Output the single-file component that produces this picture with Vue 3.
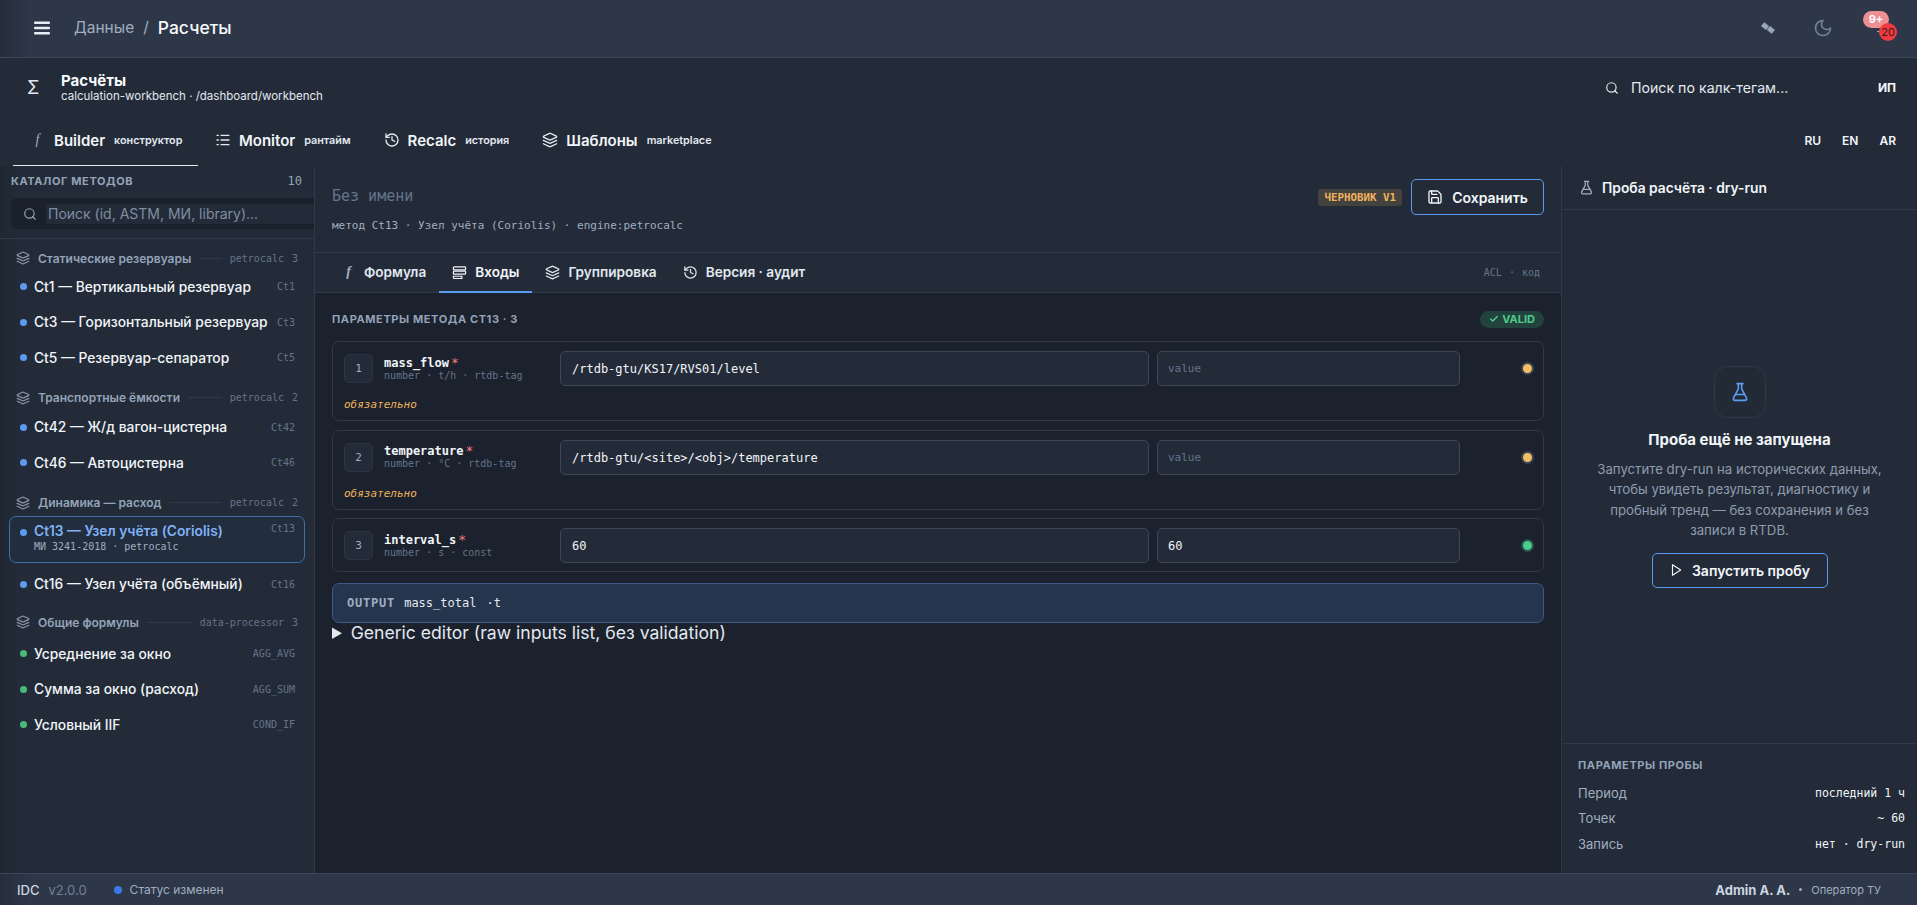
<script setup>
const groups = [
  { name: 'Статические резервуары', lib: 'petrocalc', count: 3, items: [
    { name: 'Ct1 — Вертикальный резервуар', code: 'Ct1' },
    { name: 'Ct3 — Горизонтальный резервуар', code: 'Ct3' },
    { name: 'Ct5 — Резервуар-сепаратор', code: 'Ct5' },
  ] },
  { name: 'Транспортные ёмкости', lib: 'petrocalc', count: 2, items: [
    { name: 'Ct42 — Ж/д вагон-цистерна', code: 'Ct42' },
    { name: 'Ct46 — Автоцистерна', code: 'Ct46' },
  ] },
  { name: 'Динамика — расход', lib: 'petrocalc', count: 2, items: [
    { name: 'Ct13 — Узел учёта (Coriolis)', code: 'Ct13', active: true, sub: 'МИ 3241-2018 · petrocalc' },
    { name: 'Ct16 — Узел учёта (объёмный)', code: 'Ct16' },
  ] },
  { name: 'Общие формулы', lib: 'data-processor', count: 3, green: true, items: [
    { name: 'Усреднение за окно', code: 'AGG_AVG' },
    { name: 'Сумма за окно (расход)', code: 'AGG_SUM' },
    { name: 'Условный IIF', code: 'COND_IF' },
  ] },
];

const params = [
  { n: 1, name: 'mass_flow', meta: 'number · t/h · rtdb-tag', value: '/rtdb-gtu/KS17/RVS01/level', second: '', warn: true },
  { n: 2, name: 'temperature', meta: 'number · °C · rtdb-tag', value: '/rtdb-gtu/<site>/<obj>/temperature', second: '', warn: true },
  { n: 3, name: 'interval_s', meta: 'number · s · const', value: '60', second: '60', warn: false },
];

const probe = [
  { label: 'Период', value: 'последний 1 ч' },
  { label: 'Точек', value: '~ 60' },
  { label: 'Запись', value: 'нет · dry-run' },
];
</script>

<template>
  <div class="page">
    <header class="topbar">
      <svg class="burger" viewBox="0 0 16 14" width="16" height="14" fill="currentColor"><rect y="0.5" width="16" height="2.6" rx="1"/><rect y="5.7" width="16" height="2.6" rx="1"/><rect y="10.9" width="16" height="2.6" rx="1"/></svg>
      <span class="crumb">Данные</span>
      <span class="crumb slash">/</span>
      <span class="crumb-now">Расчеты</span>
      <div class="top-actions">
        <svg class="sat" viewBox="0 0 12 12" width="14" height="14" fill="currentColor"><rect x="0.8" y="2.2" width="5.4" height="4.4" transform="rotate(40 3.5 4.4)"/><rect x="5.8" y="5.4" width="5.4" height="4.4" transform="rotate(40 8.5 7.6)"/></svg>
        <svg class="moon" viewBox="0 0 24 24" width="20" height="20" fill="none" stroke="currentColor" stroke-width="2" stroke-linecap="round" stroke-linejoin="round"><path d="M12 3a6 6 0 0 0 9 9 9 9 0 1 1-9-9Z"/></svg>
        <div class="bell">
          <span class="bell-dash"></span>
          <span class="badge-pink">9+</span>
          <span class="badge-red">20</span>
        </div>
      </div>
    </header>

    <section class="headrow">
      <span class="sigma">Σ</span>
      <div class="headtext">
        <div class="headtitle">Расчёты</div>
        <div class="headsub">calculation-workbench · /dashboard/workbench</div>
      </div>
      <div class="tagsearch">
        <svg viewBox="0 0 24 24" width="14" height="14" fill="none" stroke="currentColor" stroke-width="2" stroke-linecap="round"><circle cx="11" cy="11" r="8"/><path d="m21 21-4.3-4.3"/></svg>
        <span>Поиск по калк-тегам...</span>
      </div>
      <span class="initials">ИП</span>
    </section>

    <nav class="maintabs">
      <div class="mtab on">
        <span class="fx">f</span><b>Builder</b><small>конструктор</small>
      </div>
      <div class="mtab">
        <svg viewBox="0 0 24 24" width="16" height="16" fill="none" stroke="currentColor" stroke-width="2" stroke-linecap="round"><path d="M9 5h12M9 12h12M9 19h12M3 5h2M3 12h2M3 19h2"/></svg>
        <b>Monitor</b><small>рантайм</small>
      </div>
      <div class="mtab">
        <svg viewBox="0 0 24 24" width="16" height="16" fill="none" stroke="currentColor" stroke-width="2" stroke-linecap="round" stroke-linejoin="round"><path d="M3 12a9 9 0 1 0 9-9 9.75 9.75 0 0 0-6.74 2.74L3 8"/><path d="M3 3v5h5"/><path d="M12 7v5l4 2"/></svg>
        <b>Recalc</b><small>история</small>
      </div>
      <div class="mtab">
        <svg viewBox="0 0 24 24" width="16" height="16" fill="none" stroke="currentColor" stroke-width="2" stroke-linecap="round" stroke-linejoin="round"><path d="m12.83 2.18a2 2 0 0 0-1.66 0L2.6 6.08a1 1 0 0 0 0 1.83l8.58 3.91a2 2 0 0 0 1.66 0l8.58-3.9a1 1 0 0 0 0-1.83Z"/><path d="m22 17.65-9.17 4.16a2 2 0 0 1-1.66 0L2 17.65"/><path d="m22 12.65-9.17 4.16a2 2 0 0 1-1.66 0L2 12.65"/></svg>
        <b>Шаблоны</b><small>marketplace</small>
      </div>
      <div class="langs"><span>RU</span><span>EN</span><span>AR</span></div>
    </nav>

    <div class="columns">
      <aside class="catalog">
        <div class="cat-top">
          <span class="cat-title">КАТАЛОГ МЕТОДОВ</span>
          <span class="cat-count">10</span>
        </div>
        <div class="cat-search">
          <svg viewBox="0 0 24 24" width="14" height="14" fill="none" stroke="currentColor" stroke-width="2" stroke-linecap="round"><circle cx="11" cy="11" r="8"/><path d="m21 21-4.3-4.3"/></svg>
          <div class="cat-input">Поиск (id, ASTM, МИ, library)...</div>
        </div>
        <div class="cat-list">
          <div v-for="(g, i) in groups" :key="g.name" class="group" :class="{ shared: g.green, first: i === 0 }">
            <div class="group-head">
              <svg viewBox="0 0 24 24" width="14" height="14" fill="none" stroke="currentColor" stroke-width="2" stroke-linecap="round" stroke-linejoin="round"><path d="m12.83 2.18a2 2 0 0 0-1.66 0L2.6 6.08a1 1 0 0 0 0 1.83l8.58 3.91a2 2 0 0 0 1.66 0l8.58-3.9a1 1 0 0 0 0-1.83Z"/><path d="m22 17.65-9.17 4.16a2 2 0 0 1-1.66 0L2 17.65"/><path d="m22 12.65-9.17 4.16a2 2 0 0 1-1.66 0L2 12.65"/></svg>
              <span class="group-name">{{ g.name }}</span>
              <span class="group-line"></span>
              <span class="group-lib">{{ g.lib }}</span>
              <span class="group-num">{{ g.count }}</span>
            </div>
            <div v-for="m in g.items" :key="m.code" class="method" :class="{ active: m.active }">
              <span class="mdot" :class="{ green: g.green }"></span>
              <div class="mtext">
                <div class="mname">{{ m.name }}</div>
                <div v-if="m.sub" class="msub">{{ m.sub }}</div>
              </div>
              <span class="mcode">{{ m.code }}</span>
            </div>
          </div>
        </div>
      </aside>

      <main class="center">
        <div class="draft-head">
          <div>
            <div class="draft-name">Без имени</div>
            <div class="draft-meta">метод Ct13 · Узел учёта (Coriolis) · engine:petrocalc</div>
          </div>
          <div class="draft-right">
            <span class="draft-tag">ЧЕРНОВИК V1</span>
            <button class="btn save">
              <svg viewBox="0 0 24 24" width="16" height="16" fill="none" stroke="currentColor" stroke-width="2" stroke-linecap="round" stroke-linejoin="round"><path d="M15.2 3a2 2 0 0 1 1.4.6l3.8 3.8a2 2 0 0 1 .6 1.4V19a2 2 0 0 1-2 2H5a2 2 0 0 1-2-2V5a2 2 0 0 1 2-2z"/><path d="M17 21v-7a1 1 0 0 0-1-1H8a1 1 0 0 0-1 1v7"/><path d="M7 3v4a1 1 0 0 0 1 1h7"/></svg>
              Сохранить
            </button>
          </div>
        </div>

        <div class="subtabs">
          <div class="stab"><span class="fx small">f</span>Формула</div>
          <div class="stab on">
            <svg viewBox="0 0 16 16" width="15" height="15" fill="none" stroke="currentColor" stroke-width="1.3"><rect x="1.5" y="2" width="13" height="3.2" rx="0.8"/><rect x="1.5" y="6.6" width="13" height="3.2" rx="0.8"/><path d="M1.5 12h9v2.4h-8a1 1 0 0 1-1-1z"/></svg>
            Входы
          </div>
          <div class="stab">
            <svg viewBox="0 0 24 24" width="15" height="15" fill="none" stroke="currentColor" stroke-width="2" stroke-linecap="round" stroke-linejoin="round"><path d="m12.83 2.18a2 2 0 0 0-1.66 0L2.6 6.08a1 1 0 0 0 0 1.83l8.58 3.91a2 2 0 0 0 1.66 0l8.58-3.9a1 1 0 0 0 0-1.83Z"/><path d="m22 17.65-9.17 4.16a2 2 0 0 1-1.66 0L2 17.65"/><path d="m22 12.65-9.17 4.16a2 2 0 0 1-1.66 0L2 12.65"/></svg>
            Группировка
          </div>
          <div class="stab">
            <svg viewBox="0 0 24 24" width="15" height="15" fill="none" stroke="currentColor" stroke-width="2" stroke-linecap="round" stroke-linejoin="round"><path d="M3 12a9 9 0 1 0 9-9 9.75 9.75 0 0 0-6.74 2.74L3 8"/><path d="M3 3v5h5"/><path d="M12 7v5l4 2"/></svg>
            Версия · аудит
          </div>
          <span class="acl">ACL · код</span>
        </div>

        <div class="inputs">
          <div class="inputs-top">
            <span class="inputs-title">ПАРАМЕТРЫ МЕТОДА CT13 · 3</span>
            <span class="valid">
              <svg viewBox="0 0 24 24" width="10" height="10" fill="none" stroke="currentColor" stroke-width="3.5" stroke-linecap="round" stroke-linejoin="round"><path d="M20 6 9 17l-5-5"/></svg>
              VALID
            </span>
          </div>

          <div v-for="p in params" :key="p.n" class="card">
            <div class="card-row">
              <span class="num">{{ p.n }}</span>
              <div class="pname">
                <div class="pname-top">{{ p.name }}<span class="req">*</span></div>
                <div class="pname-meta">{{ p.meta }}</div>
              </div>
              <div class="field main-field">{{ p.value }}</div>
              <div class="field val-field" :class="{ empty: !p.second }">{{ p.second || 'value' }}</div>
              <span class="status" :class="p.warn ? 'warn' : 'ok'"></span>
            </div>
            <div v-if="p.warn" class="must">обязательно</div>
          </div>

          <div class="output">
            <span class="out-label">OUTPUT</span>
            <span class="out-name">mass_total</span>
            <span class="out-unit">·t</span>
          </div>

          <details class="generic">
            <summary>Generic editor (raw inputs list, без validation)</summary>
          </details>
        </div>
      </main>

      <aside class="trial">
        <div class="trial-head">
          <svg viewBox="0 0 24 24" width="15" height="15" fill="none" stroke="currentColor" stroke-width="2" stroke-linecap="round" stroke-linejoin="round"><path d="M14 2v6a2 2 0 0 0 .245.96l5.51 10.08A2 2 0 0 1 18 22H6a2 2 0 0 1-1.755-2.96l5.51-10.08A2 2 0 0 0 10 8V2"/><path d="M6.453 15h11.094"/><path d="M8.5 2h7"/></svg>
          <span>Проба расчёта · dry-run</span>
        </div>
        <div class="trial-empty">
          <div class="flask">
            <svg viewBox="0 0 24 24" width="20" height="20" fill="none" stroke="currentColor" stroke-width="2" stroke-linecap="round" stroke-linejoin="round"><path d="M14 2v6a2 2 0 0 0 .245.96l5.51 10.08A2 2 0 0 1 18 22H6a2 2 0 0 1-1.755-2.96l5.51-10.08A2 2 0 0 0 10 8V2"/><path d="M6.453 15h11.094"/><path d="M8.5 2h7"/></svg>
          </div>
          <div class="empty-title">Проба ещё не запущена</div>
          <p class="empty-text">Запустите dry-run на исторических данных, чтобы увидеть результат, диагностику и пробный тренд — без сохранения и без записи в RTDB.</p>
          <button class="btn run">
            <svg viewBox="0 0 24 24" width="14" height="14" fill="none" stroke="currentColor" stroke-width="2" stroke-linejoin="round"><polygon points="6 3 20 12 6 21 6 3"/></svg>
            Запустить пробу
          </button>
        </div>
        <div class="probe">
          <div class="probe-title">ПАРАМЕТРЫ ПРОБЫ</div>
          <div v-for="r in probe" :key="r.label" class="probe-row">
            <span class="probe-label">{{ r.label }}</span>
            <span class="probe-val">{{ r.value }}</span>
          </div>
        </div>
      </aside>
    </div>

    <footer class="foot">
      <span class="foot-brand">IDC</span>
      <span class="foot-ver">v2.0.0</span>
      <span class="foot-dot"></span>
      <span class="foot-status">Статус изменен</span>
      <div class="foot-user">
        <b>Admin A. A.</b>
        <i></i>
        <span>Оператор ТУ</span>
      </div>
    </footer>
  </div>
</template>

<style scoped>
.page {
  height: 905px;
  display: flex;
  flex-direction: column;
  overflow: hidden;
  background: #232b38;
  color: #e2e8f0;
  font-family: Inter, "Noto Sans", sans-serif;
}

.topbar {
  height: 55px;
  flex: none;
  display: flex;
  align-items: center;
  padding: 0 20px 2px 34px;
  background: linear-gradient(90deg, #252d3a 0, #2d3748 30px);
  border-bottom: 1px solid #3c4759;
  box-sizing: content-box;
}
.burger { color: #e8edf4; margin-right: 24px; }
.crumb { font-size: 15.5px; color: #a0aec0; }
.slash { margin: 0 9px 0 9px; }
.crumb-now { font-size: 17.5px; font-weight: 500; color: #f7fafc; }
.top-actions { margin-left: auto; display: flex; align-items: center; }
.sat { color: #9aa5b6; margin-right: 38px; }
.moon { color: #718096; margin-right: 32px; }
.bell { width: 32px; height: 32px; position: relative; }
.bell-dash { position: absolute; left: 12px; top: 19px; width: 3px; height: 1px; background: #a0aec0; }
.badge-pink {
  position: absolute;
  left: -2px;
  top: -1px;
  width: 26px;
  height: 17px;
  border-radius: 9px;
  background: #ee8f94;
  color: #fff;
  font-size: 11px;
  font-weight: 700;
  line-height: 17px;
  text-align: center;
}
.badge-red {
  position: absolute;
  left: 14px;
  top: 11px;
  width: 18px;
  height: 18px;
  border-radius: 50%;
  background: #ef3b3f;
  color: #3a1a22;
  font-size: 11px;
  line-height: 18px;
  text-align: center;
}

.headrow {
  height: 59px;
  flex: none;
  display: flex;
  align-items: center;
  padding: 0 21px 0 27px;
}
.sigma { width: 34px; font-size: 18px; color: #e2e8f0; flex: none; }
.headtitle { font-size: 15px; font-weight: 700; color: #f7fafc; line-height: 16px; }
.headsub { font-size: 11.5px; color: #e2e8f0; line-height: 14px; }
.tagsearch {
  margin-left: auto;
  display: flex;
  align-items: center;
  gap: 12px;
  font-size: 14.2px;
  color: #e2e8f0;
  width: 273px;
}
.initials { font-size: 12px; font-weight: 700; color: #f7fafc; }

.maintabs {
  height: 49px;
  flex: none;
  display: flex;
  align-items: flex-start;
  padding-left: 13px;
}
.mtab {
  height: 49px;
  padding: 0 16.5px 2px;
  display: flex;
  align-items: center;
  color: #e2e8f0;
  border-bottom: 1px solid transparent;
  box-sizing: border-box;
}
.mtab.on { border-bottom-color: #e2e8f0; padding-left: 17px; padding-right: 16px; }
.mtab b { font-size: 15px; font-weight: 600; margin-left: 8px; color: #f1f5f9; }
.mtab small { font-size: 10.8px; font-weight: 600; margin-left: 9px; color: #e2e8f0; }
.fx {
  font-family: "Liberation Serif", serif;
  font-style: italic;
  font-size: 14px;
  width: 15px;
  text-align: center;
  color: #a0aec0;
}
.mtab .fx { margin-right: 1px; }
.langs {
  margin-left: auto;
  height: 47px;
  display: flex;
  align-items: center;
  gap: 21px;
  padding-right: 21px;
  font-size: 12px;
  font-weight: 600;
  color: #f1f5f9;
}

.columns { flex: 1; display: flex; min-height: 0; }

.catalog {
  width: 315px;
  flex: none;
  border-right: 1px solid #2f3948;
  overflow: hidden;
  box-sizing: border-box;
  background: linear-gradient(90deg, #1f2733 0, #232b38 18px);
}
.cat-top {
  display: flex;
  justify-content: space-between;
  align-items: center;
  padding: 4px 12px 0 11px;
  height: 21px;
}
.cat-title { font-size: 11px; font-weight: 700; letter-spacing: 0.6px; color: #94a3b8; }
.cat-count { font-family: "DejaVu Sans Mono", monospace; font-size: 12px; color: #94a3b8; }
.cat-search {
  margin: 7px 0 0 11px;
  width: 330px;
  height: 31px;
  display: flex;
  align-items: center;
  gap: 9px;
  padding-left: 12px;
  background: #1a202c;
  border-radius: 6px;
  color: #94a3b8;
  box-sizing: border-box;
}
.cat-search svg { flex: none; }
.cat-input {
  flex: 1;
  height: 20px;
  line-height: 20px;
  padding-left: 2px;
  background: #232b38;
  font-size: 14px;
  color: #7f8ea3;
  white-space: nowrap;
}
.cat-list { margin-top: 9px; border-top: 1px solid #2f3948; padding: 10px 9px 0; }
.group { margin-bottom: 13px; }
.group-head {
  height: 18px;
  margin-bottom: 3px;
  display: flex;
  align-items: center;
  padding: 0 7px;
  color: #8a97a9;
}
.group.first .group-head { margin-bottom: 2px; }
.group.shared { margin-top: -2px; }
.group.shared .group-head { margin-bottom: 5px; }
.group-head svg { flex: none; margin-right: 8px; }
.group-name { font-size: 12px; font-weight: 600; color: #94a3b8; white-space: nowrap; }
.group-line { flex: 1; height: 1px; background: #2f3948; margin: 0 8px; }
.group-lib { font-family: "DejaVu Sans Mono", monospace; font-size: 10px; color: #64748b; }
.group-num { font-family: "DejaVu Sans Mono", monospace; font-size: 10px; color: #64748b; margin-left: 8px; }
.method {
  min-height: 35.5px;
  display: flex;
  align-items: center;
  padding: 0 9px 0 10px;
  border: 1px solid transparent;
  border-radius: 7px;
  box-sizing: border-box;
}
.method.active {
  min-height: 47px;
  border-color: #3f6ea8;
  align-items: flex-start;
  padding-top: 6px;
  background: #222d3d;
  margin: 4px 0;
}
.mdot { width: 7px; height: 7px; border-radius: 50%; background: #5b9cf0; margin-right: 7px; flex: none; }
.method.active .mdot { margin-top: 6px; }
.mdot.green { background: #48bb78; }
.mtext { flex: 1; min-width: 0; }
.mname { font-size: 13.8px; font-weight: 500; color: #f1f5f9; white-space: nowrap; }
.method.active .mname { color: #7fb2f5; font-weight: 600; }
.msub { font-family: "DejaVu Sans Mono", monospace; font-size: 10px; color: #a0aec0; margin-top: 2px; }
.mcode { font-family: "DejaVu Sans Mono", monospace; font-size: 10px; color: #64748b; }

.center { width: 1247px; flex: none; display: flex; flex-direction: column; border-right: 1px solid #2f3948; box-sizing: border-box; }
.draft-head {
  height: 87px;
  flex: none;
  display: flex;
  justify-content: space-between;
  align-items: flex-start;
  padding: 0 17px;
  border-bottom: 1px solid #2f3948;
  box-sizing: border-box;
}
.draft-name { font-family: "DejaVu Sans Mono", monospace; font-size: 15px; color: #64748b; margin-top: 20px; line-height: 20px; }
.draft-meta { font-family: "DejaVu Sans Mono", monospace; font-size: 11px; color: #a0aec0; margin-top: 13px; }
.draft-right { display: flex; align-items: center; gap: 9px; margin-top: 13px; }
.draft-tag {
  height: 17px;
  line-height: 17px;
  padding: 0 6px;
  border-radius: 3px;
  background: #44423f;
  color: #efb45c;
  font-family: "DejaVu Sans Mono", monospace;
  font-size: 10.8px;
  font-weight: 700;
}
.btn {
  display: flex;
  align-items: center;
  justify-content: center;
  background: transparent;
  border: 1px solid #5b9cf0;
  border-radius: 5px;
  color: #f1f5f9;
  font-family: inherit;
  font-weight: 600;
  box-sizing: border-box;
}
.save { width: 133px; height: 36px; gap: 9px; font-size: 14px; }
.subtabs {
  height: 40px;
  flex: none;
  display: flex;
  align-items: stretch;
  padding-left: 13px;
  border-bottom: 1px solid #2f3948;
  box-sizing: border-box;
}
.stab {
  display: flex;
  align-items: center;
  gap: 8px;
  padding: 0 13px;
  font-size: 13.6px;
  font-weight: 600;
  color: #e2e8f0;
  border-bottom: 2px solid transparent;
  margin-bottom: -1px;
}
.stab.on { border-bottom-color: #5b9cf0; color: #f1f5f9; }
.acl {
  margin-left: auto;
  padding-right: 21px;
  align-self: center;
  font-family: "DejaVu Sans Mono", monospace;
  font-size: 10px;
  color: #64748b;
  word-spacing: 1px;
}

.inputs { flex: 1; background: #1b212d; padding: 17px 17px 0; }
.inputs-top { display: flex; justify-content: space-between; align-items: center; height: 18px; margin-bottom: 13px; }
.inputs-title { font-size: 11px; font-weight: 700; letter-spacing: 0.6px; color: #94a3b8; }
.valid {
  display: flex;
  align-items: center;
  gap: 3px;
  height: 17px;
  padding: 0 9px;
  border-radius: 9px;
  background: #21423d;
  color: #4fc98a;
  font-size: 11px;
  font-weight: 700;
}
.card {
  border: 1px solid #2f3948;
  border-radius: 7px;
  padding: 9px 11px 8px;
  margin-bottom: 8.5px;
}
.card-row { display: flex; align-items: center; }
.num {
  width: 29px;
  height: 29px;
  flex: none;
  border: 1px solid #2c3543;
  border-radius: 5px;
  background: #232b38;
  text-align: center;
  line-height: 27px;
  box-sizing: border-box;
  font-family: "DejaVu Sans Mono", monospace;
  font-size: 11px;
  color: #a0aec0;
}
.pname { width: 176px; flex: none; margin-left: 11px; }
.pname-top { font-family: "DejaVu Sans Mono", monospace; font-size: 12px; font-weight: 700; color: #f1f5f9; line-height: 13px; }
.req { color: #ef7c7f; margin-left: 2px; font-size: 13px; font-weight: 400; }
.pname-meta { font-family: "DejaVu Sans Mono", monospace; font-size: 10px; color: #64748b; line-height: 12px; }
.field {
  height: 35px;
  line-height: 34px;
  border: 1px solid #3c4759;
  border-radius: 5px;
  background: #232b38;
  padding: 0 11px;
  box-sizing: border-box;
  font-family: "DejaVu Sans Mono", monospace;
  font-size: 12px;
  color: #f1f5f9;
}
.main-field { width: 589px; flex: none; }
.val-field { width: 303px; flex: none; margin-left: 8px; padding: 0 10px; }
.val-field.empty { color: #64748b; font-size: 11px; }
.status { width: 9px; height: 9px; border-radius: 50%; margin-left: 63px; flex: none; }
.status.warn { background: #f2c063; box-shadow: 0 0 0 2px #3e4654; }
.status.ok { background: #48cf8e; box-shadow: 0 0 0 2px #2b4f49; }
.must { font-family: "DejaVu Sans Mono", monospace; font-style: italic; font-size: 11px; color: #efb45c; margin-top: 11px; line-height: 15px; }
.output {
  height: 40px;
  display: flex;
  align-items: center;
  gap: 9px;
  padding: 0 14px;
  background: #26354e;
  border: 1px solid #3a5a8a;
  border-radius: 7px;
  box-sizing: border-box;
  margin-top: 11px;
  font-family: "DejaVu Sans Mono", monospace;
  font-size: 12px;
}
.out-label { font-weight: 700; color: #a0aec0; letter-spacing: 0.8px; }
.out-name { color: #e2e8f0; }
.out-unit { color: #e2e8f0; margin-left: 1px; }
.generic { font-size: 17.6px; color: #e2e8f0; margin-top: -1px; }

.trial { flex: 1; min-width: 0; display: flex; flex-direction: column; background: #232b38; }
.trial-head {
  height: 44px;
  flex: none;
  display: flex;
  align-items: center;
  gap: 8px;
  padding-left: 17px;
  border-bottom: 1px solid #2f3948;
  font-size: 13.8px;
  font-weight: 600;
  color: #f1f5f9;
  box-sizing: border-box;
}
.trial-head svg { color: #a0aec0; }
.trial-empty {
  flex: 1;
  display: flex;
  flex-direction: column;
  align-items: center;
  justify-content: center;
  padding: 0 33px;
}
.flask {
  width: 50px;
  height: 50px;
  display: flex;
  align-items: center;
  justify-content: center;
  border: 1px solid #2f3948;
  border-radius: 14px;
  background: #222a36;
  color: #5b9cf0;
}
.empty-title { font-size: 15px; font-weight: 700; color: #f1f5f9; margin-top: 12px; }
.empty-text { font-size: 13.2px; line-height: 20.5px; color: #8f9cb0; text-align: center; margin: 10px 0 12px; }
.run { width: 176px; height: 35px; gap: 9px; font-size: 14px; }
.probe { height: 130px; flex: none; padding: 14px 12px 0 16px; border-top: 1px solid #2f3948; box-sizing: border-box; }
.probe-title { font-size: 11px; font-weight: 700; letter-spacing: 0.6px; color: #94a3b8; margin-bottom: 8px; }
.probe-row { display: flex; justify-content: space-between; align-items: center; height: 25.5px; }
.probe-label { font-size: 13px; color: #a0aec0; }
.probe-val { font-family: "DejaVu Sans Mono", monospace; font-size: 11.5px; color: #f1f5f9; }

.foot {
  height: 32px;
  flex: none;
  display: flex;
  align-items: center;
  padding: 0 36px 0 17px;
  background: linear-gradient(90deg, #262e3b 0, #2d3748 30px);
  border-top: 1px solid #3c4759;
  box-sizing: border-box;
}
.foot-brand { font-size: 13px; font-weight: 500; color: #cbd5e0; }
.foot-ver { font-size: 13px; color: #718096; margin-left: 9px; }
.foot-dot { width: 8px; height: 8px; border-radius: 50%; background: #3b78e7; margin-left: 27px; }
.foot-status { font-size: 12px; color: #a0aec0; margin-left: 8px; }
.foot-user { margin-left: auto; display: flex; align-items: center; }
.foot-user b { font-size: 13px; font-weight: 700; color: #cbd5e0; }
.foot-user i { width: 3px; height: 3px; border-radius: 50%; background: #a0aec0; margin: 0 9px; }
.foot-user span { font-size: 11px; color: #a0aec0; }
</style>

<style>
html, body { margin: 0; background: #232b38; }
</style>
